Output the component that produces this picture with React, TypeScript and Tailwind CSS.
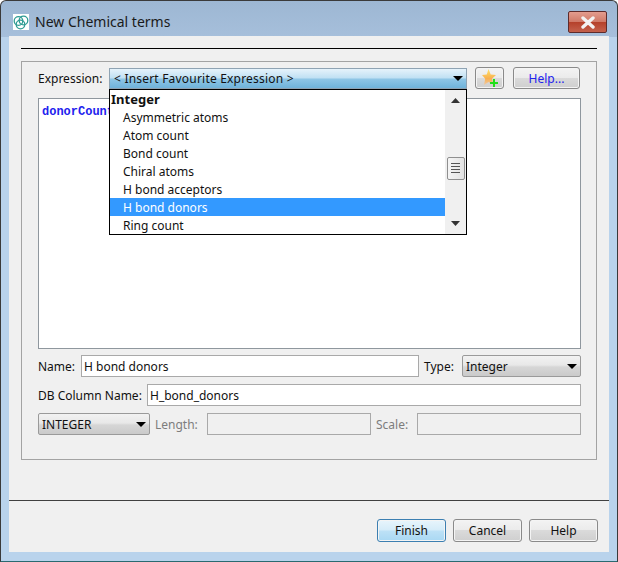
const FONT = "font-['Noto_Sans','Liberation_Sans',sans-serif]";

function Arrow({ className = "" }: { className?: string }) {
  return (
    <svg width="10" height="5" viewBox="0 0 10 5" className={className}>
      <path d="M0 0h10L5 5z" fill="#000" />
    </svg>
  );
}

function Logo() {
  return (
    <svg width="16" height="16" viewBox="0 0 16 16" className="bg-white">
      <g fill="none" stroke="#2f9c94" strokeWidth="1.3">
        <circle cx="5.500" cy="7" r="4.300" />
        <circle cx="10.500" cy="6.500" r="4.300" />
        <circle cx="7.500" cy="10.500" r="4.300" />
      </g>
    </svg>
  );
}

function Star() {
  return (
    <svg width="16" height="19" viewBox="0 0 16 19">
      <defs>
        <linearGradient id="s" x1="0" y1="0" x2="0" y2="1">
          <stop offset="0" stopColor="#ffe36a" />
          <stop offset="0.6" stopColor="#f8b050" />
          <stop offset="1" stopColor="#efc9a4" />
        </linearGradient>
      </defs>
      <path d="M6.500 0l2.200 5.500 5.300.5-4 3.700L11.500 16 6.500 13 2 16l1.200-6.300L0 6l4.800-.5z" fill="url(#s)" />
      <path d="M11 10v3H8v2h3v3h2v-3h3v-2h-3v-3z" fill="#22e01a" />
    </svg>
  );
}

function Btn({ children, className = "" }: { children: React.ReactNode; className?: string }) {
  return (
    <div
      className={`flex items-center justify-center rounded-[3px] border border-[#8a8a8a] bg-[linear-gradient(#f3f3f3_0%,#ebebeb_48%,#dadada_50%,#cfcfcf_100%)] shadow-[inset_0_0_0_1px_#f4f4f4] ${className}`}
    >
      {children}
    </div>
  );
}

function Label({ children, className = "" }: { children: React.ReactNode; className?: string }) {
  return <span className={`pt-[2px] ${className}`}>{children}</span>;
}

function Field({ value, className = "" }: { value?: string; className?: string }) {
  return (
    <div className={`flex h-[22px] items-center border border-[#a9a9a9] pl-[2px] pt-[2px] ${value ? "bg-white" : ""} ${className}`}>
      {value}
    </div>
  );
}

function Select({ value, className = "" }: { value: string; className?: string }) {
  return (
    <div
      className={`flex h-[22px] items-center justify-between rounded-[2px] border border-[#9a9a9a] bg-[linear-gradient(#f2f2f2_0%,#e8e8e8_45%,#d6d6d6_55%,#cacaca_100%)] pl-[3px] pr-[3px] ${className}`}
    >
      <span className="pt-[2px]">{value}</span>
      <Arrow />
    </div>
  );
}

const items = ["Asymmetric atoms", "Atom count", "Bond count", "Chiral atoms", "H bond acceptors", "H bond donors", "Ring count"];

function Dropdown() {
  return (
    <div className="absolute left-0 top-[21px] z-10 flex h-[146px] w-[358px] border border-black bg-white">
      <div className="w-[335px]">
        <div className="flex h-[18px] items-center pl-px pt-[2px] font-bold text-[13px]">Integer</div>
        {items.map((t) => (
          <div
            key={t}
            className={`flex h-[18px] items-center pl-[13px] pt-[2px] ${t === "H bond donors" ? "bg-[#3399ff] text-white" : ""}`}
          >
            {t}
          </div>
        ))}
      </div>
      <div className="flex w-[21px] flex-col items-center bg-[#f0f0f0] pt-[8px]">
        <svg width="9" height="5" viewBox="0 0 9 5"><path d="M0 5h9L4.500 0z" fill="#333" /></svg>
        <div className="mt-[54px] flex h-[23px] w-[18px] flex-col items-center justify-center gap-[2px] rounded-[2px] border border-[#8f8f8f] bg-[linear-gradient(90deg,#f5f5f5,#e2e2e2)]">
          <div className="h-px w-[9px] bg-[#555]" />
          <div className="h-px w-[9px] bg-[#555]" />
          <div className="h-px w-[9px] bg-[#555]" />
          <div className="h-px w-[9px] bg-[#555]" />
        </div>
        <svg width="9" height="5" viewBox="0 0 9 5" className="mt-[41px]"><path d="M0 0h9L4.500 5z" fill="#333" /></svg>
      </div>
    </div>
  );
}

export default function App() {
  return (
    <div className={`${FONT} flex h-[562px] w-[618px] flex-col overflow-hidden rounded-t-[6px] border border-[#3a3a3a] border-b-[#2a6a70] bg-[linear-gradient(#9db7d3_0px,#a6bfdb_36px,#b9d3ec_36px,#b9d3ec_100%)] text-[12px] leading-none text-[#111]`}>
      <div className="flex h-[35px] shrink-0 justify-between pl-[12px] pr-[10px]">
        <div className="flex items-center gap-[6px] pt-[7px]">
          <Logo />
          <span className="text-[14px] text-[#1a1a1a]">New Chemical terms</span>
        </div>
        <div className="mt-[10px] flex h-[22px] w-[39px] items-center justify-center rounded-[2px] border border-[#5e2b2b] bg-[linear-gradient(#e39c8e_0%,#d07a68_48%,#b5402a_50%,#c4614c_100%)]">
          <svg width="16" height="13" viewBox="0 0 16 13">
            <path d="M3 2l10 9M13 2L3 11" stroke="#f3f3f3" strokeWidth="3.400" strokeLinecap="round" />
          </svg>
        </div>
      </div>

      <div className="mx-[8px] mb-[9px] flex flex-1 flex-col bg-[#f0f0f0]">
        <div className="mx-[12px] mt-[12px] h-px bg-black" />
        <div className="mx-[12px] mt-[12px] h-[399px] border border-[#a3a3a3] px-[16px] pt-[5px]">
          <div className="relative flex h-[22px] items-center">
            <Label className="w-[71px]">Expression:</Label>
            <div className="relative h-[21px] w-[358px]">
              <div className="flex h-[21px] items-center justify-between border border-[#8fa3b3] bg-[linear-gradient(#e6f3fb_0%,#bfe0f3_48%,#8fc6e6_52%,#6fb3da_100%)] pl-[4px] pr-[3px]">
                <span className="pt-[2px] tracking-[0.2px]">&lt; Insert Favourite Expression &gt;</span>
                <Arrow />
              </div>
              <Dropdown />
            </div>
            <Btn className="ml-[8px] h-[22px] w-[29px]"><Star /></Btn>
            <Btn className="ml-[9px] h-[22px] w-[67px] pt-[2px] text-[#2222ee]">Help...</Btn>
          </div>

          <div className="mt-[9px] h-[251px] w-[543px] border border-[#8f979e] bg-white pl-[3px] pt-[7px] font-['Liberation_Mono',monospace] font-bold text-[12px] text-[#2222ee]">
            donorCount
          </div>

          <div className="mt-[6px] flex h-[22px] w-[543px] items-center">
            <Label className="w-[43px]">Name:</Label>
            <Field value="H bond donors" className="w-[338px]" />
            <Label className="ml-[5px] w-[38px]">Type:</Label>
            <Select value="Integer" className="w-[119px]" />
          </div>

          <div className="mt-[7px] flex h-[22px] w-[543px] items-center">
            <Label className="w-[109px]">DB Column Name:</Label>
            <Field value="H_bond_donors" className="w-[434px]" />
          </div>

          <div className="mt-[7px] flex h-[22px] w-[543px] items-center">
            <Select value="INTEGER" className="w-[112px]" />
            <Label className="ml-[5px] w-[52px] text-[#7d7d7d]">Length:</Label>
            <Field className="w-[164px]" />
            <Label className="ml-[5px] w-[41px] text-[#7d7d7d]">Scale:</Label>
            <Field className="w-[164px]" />
          </div>
        </div>

        <div className="mt-[40px] h-px bg-[#404040]" />
        <div className="mt-[18px] flex justify-end gap-[7px] pr-[11px]">
          <Btn className="h-[23px] w-[69px] !border-[#3c7fb1] !bg-[linear-gradient(#e8f5fc_0%,#d5ecf9_48%,#bde1f6_52%,#a9d8f3_100%)]">Finish</Btn>
          <Btn className="h-[23px] w-[69px]">Cancel</Btn>
          <Btn className="h-[23px] w-[69px]">Help</Btn>
        </div>
      </div>
    </div>
  );
}
